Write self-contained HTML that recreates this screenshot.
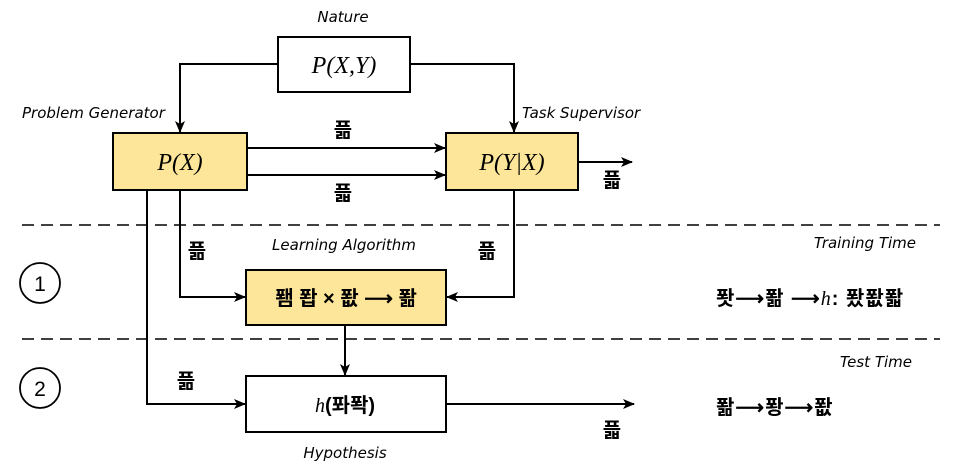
<!DOCTYPE html>
<html><head><meta charset="utf-8"><style>
body{margin:0;background:#fff;width:954px;height:473px;overflow:hidden}
svg{display:block}
.it{font-family:"DejaVu Sans",sans-serif;font-style:italic;font-size:15px;fill:#000}
.m{font-family:"Liberation Serif",serif;font-style:italic;font-size:24px;fill:#000}
.k{font-family:"Liberation Sans","Noto Sans CJK KR",sans-serif;font-size:20px;font-weight:bold;fill:#000}
</style></head><body>
<svg width="954" height="473" viewBox="0 0 954 473" xmlns="http://www.w3.org/2000/svg">
<defs><marker id="a" markerWidth="12" markerHeight="10" refX="11" refY="5" orient="auto" markerUnits="userSpaceOnUse"><path d="M0,0 L12,5 L0,10 L3,5 Z" fill="#000"/></marker></defs>
<g stroke="#000" stroke-width="2" fill="none">
<polyline points="278,64 180,64 180,132" marker-end="url(#a)"/>
<polyline points="410,64 514,64 514,132" marker-end="url(#a)"/>
<line x1="248" y1="148" x2="445" y2="148" marker-end="url(#a)"/>
<line x1="248" y1="175" x2="445" y2="175" marker-end="url(#a)"/>
<line x1="578" y1="162" x2="632" y2="162" marker-end="url(#a)"/>
<polyline points="180,190 180,297 245,297" marker-end="url(#a)"/>
<polyline points="514,190 514,297 447,297" marker-end="url(#a)"/>
<polyline points="147,190 147,404 245,404" marker-end="url(#a)"/>
<line x1="345" y1="325" x2="345" y2="375" marker-end="url(#a)"/>
<line x1="446" y1="404" x2="634" y2="404" marker-end="url(#a)"/>
<line x1="22" y1="225" x2="940" y2="225" stroke-dasharray="12,7" stroke-width="1.5"/>
<line x1="22" y1="339" x2="940" y2="339" stroke-dasharray="12,7" stroke-width="1.5"/>
<rect x="278" y="37" width="132" height="55" fill="#fff"/>
<rect x="113" y="133" width="134" height="57" fill="#fde699"/>
<rect x="446" y="133" width="132" height="57" fill="#fde699"/>
<rect x="246" y="270" width="200" height="55" fill="#fde699"/>
<rect x="246" y="376" width="200" height="56" fill="#fff"/>
<circle cx="40" cy="283" r="20" stroke-width="1.8"/>
<circle cx="40" cy="388" r="20" stroke-width="1.8"/>
</g>
<text x="343" y="22" class="it" text-anchor="middle">Nature</text>
<text x="344" y="73" class="m" text-anchor="middle">P(X,Y)</text>
<text x="22" y="118" class="it">Problem Generator</text>
<text x="522" y="118" class="it">Task Supervisor</text>
<text x="180" y="170" class="m" text-anchor="middle">P(X)</text>
<text x="512" y="170" class="m" text-anchor="middle">P(Y|X)</text>
<text x="343" y="137" class="k" text-anchor="middle">픎</text>
<text x="343" y="200" class="k" text-anchor="middle">픏</text>
<text x="612" y="187" class="k" text-anchor="middle">픏</text>
<text x="197" y="258" class="k" text-anchor="middle">픎</text>
<text x="487" y="258" class="k" text-anchor="middle">픎</text>
<text x="186" y="388" class="k" text-anchor="middle">픎</text>
<text x="612" y="437" class="k" text-anchor="middle">픏</text>
<text x="344" y="250" class="it" text-anchor="middle">Learning Algorithm</text>
<text x="916" y="248" class="it" text-anchor="end">Training Time</text>
<text x="912" y="367" class="it" text-anchor="end">Test Time</text>
<text x="345" y="458" class="it" text-anchor="middle">Hypothesis</text>
<text x="40" y="291" font-family="Liberation Sans,sans-serif" font-size="21" text-anchor="middle">1</text>
<text x="40" y="396" font-family="Liberation Sans,sans-serif" font-size="21" text-anchor="middle">2</text>
<text x="346" y="305" class="k" font-size="22" text-anchor="middle">퐴 퐙 × 퐚 ⟶ 퐒</text>
<text x="345" y="412" class="k" font-size="21" text-anchor="middle"><tspan font-family="Liberation Serif" font-style="italic" font-weight="normal">h</tspan>(퐈퐉)</text>
<text x="716" y="305" class="k" font-size="22" letter-spacing="1">퐛⟶퐒 ⟶<tspan font-family="Liberation Serif" font-style="italic" font-weight="normal">h</tspan>: 퐜퐚퐓</text>
<text x="716" y="414" class="k" font-size="22" letter-spacing="1">퐒⟶퐝⟶퐚</text>
</svg>
</body></html>
